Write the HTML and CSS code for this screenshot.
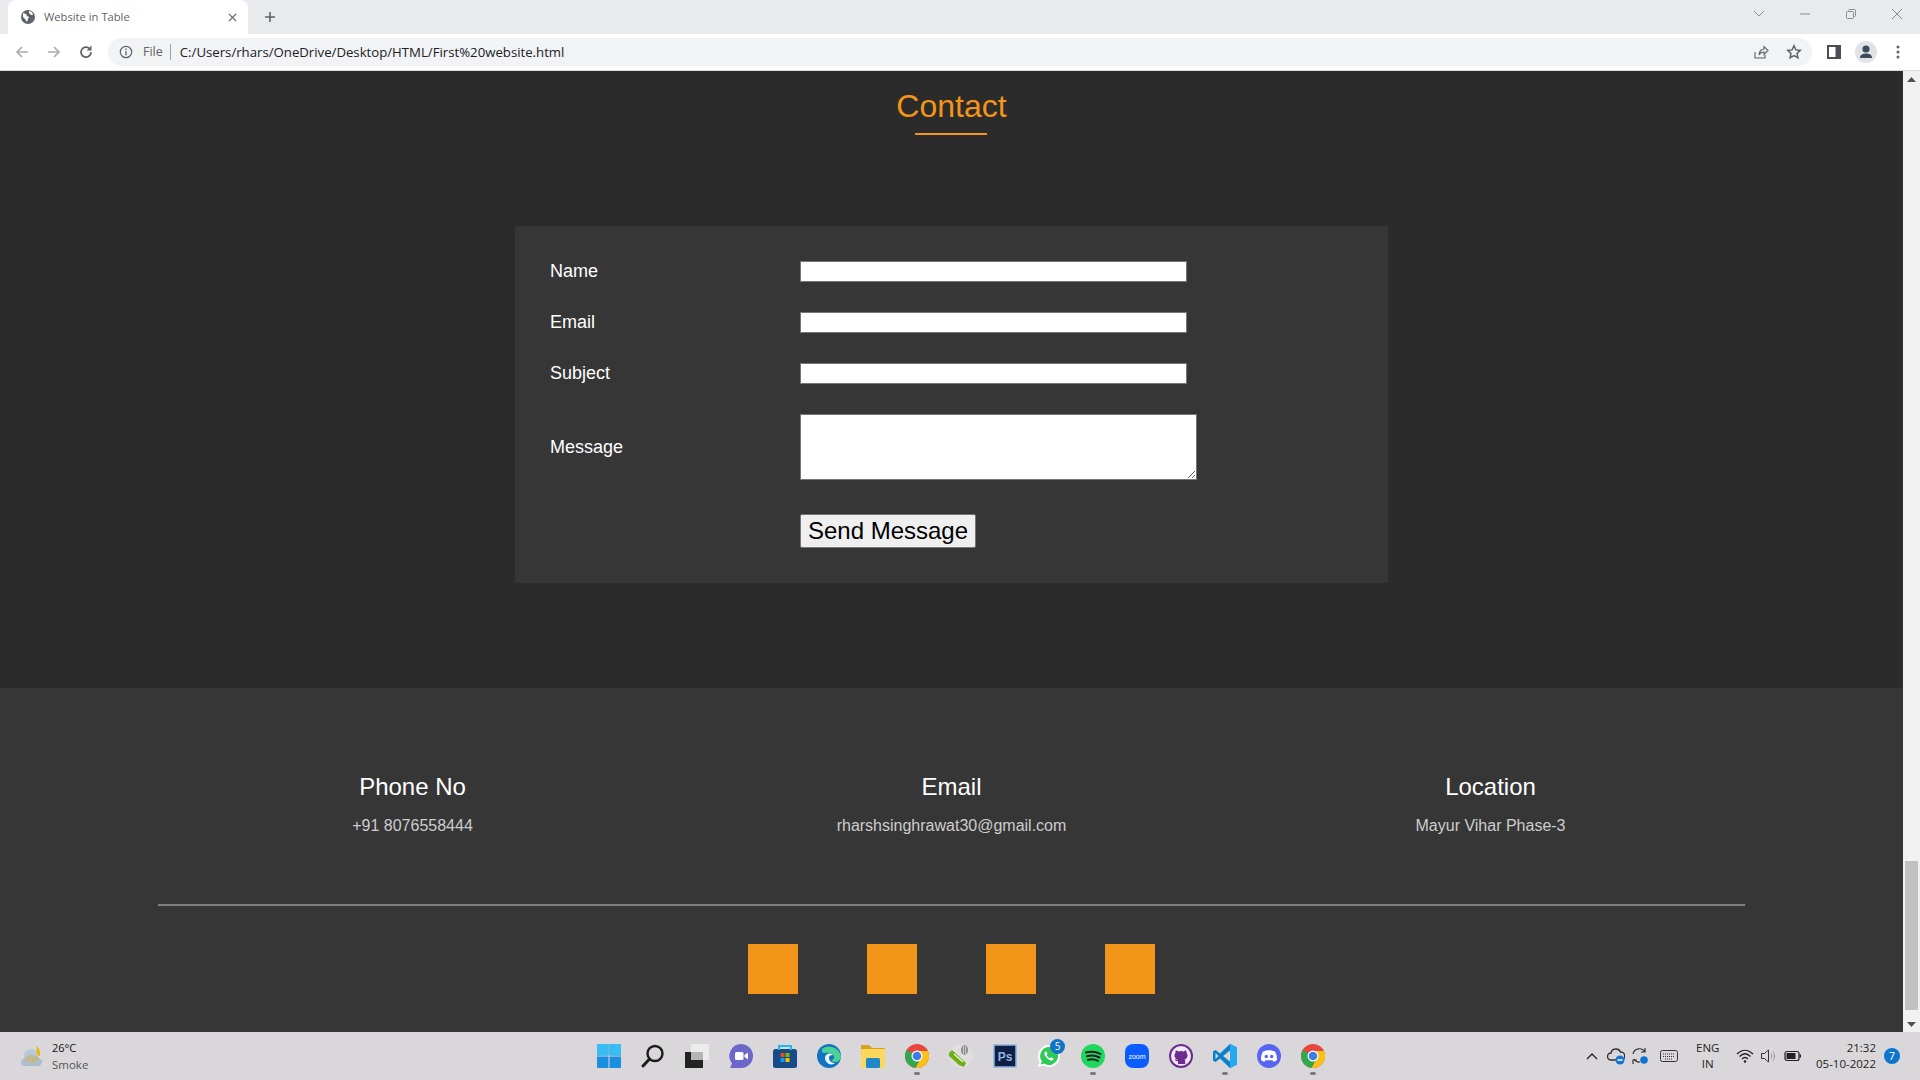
FILE: index.html
```html
<!DOCTYPE html>
<html lang="en">
<head>
<meta charset="utf-8">
<title>Website in Table</title>
<link rel="stylesheet" href="styles.css">
</head>
<body>
<div class="desktop">
  <header class="tabstrip">
    <div class="tab">
      <svg class="favicon" viewBox="0 0 16 16"><circle cx="8" cy="8" r="7" fill="#5f6368"/><path d="M3 4l3 1 1 2 2 1-1 2-1 3-2-3-2-2zM9 2l3 1 1 3-2 0-2-2z" fill="#fff"/></svg>
      <span class="tab-title">Website in Table</span>
      <svg class="tab-close" viewBox="0 0 10 10"><path d="M1 1l8 8M9 1l-8 8" stroke="#5f6368" stroke-width="1.4"/></svg>
    </div>
    <svg class="new-tab" viewBox="0 0 12 12"><path d="M6 1v10M1 6h10" stroke="#5f6368" stroke-width="1.6"/></svg>
    <div class="window-controls">
      <svg class="wc wc-chevron" viewBox="0 0 12 8"><path d="M1 1l5 5 5-5" fill="none" stroke="#8a8d91" stroke-width="1"/></svg>
      <svg class="wc" viewBox="0 0 12 12"><path d="M1 6h10" stroke="#8a8d91"/></svg>
      <svg class="wc" viewBox="0 0 12 12"><path d="M3.5 2.5a1 1 0 0 1 1-1h5a1 1 0 0 1 1 1v5a1 1 0 0 1-1 1M2.500 3.500h5a1 1 0 0 1 1 1v5a1 1 0 0 1-1 1h-5a1 1 0 0 1-1-1v-5a1 1 0 0 1 1-1z" fill="none" stroke="#8a8d91"/></svg>
      <svg class="wc" viewBox="0 0 12 12"><path d="M1 1l10 10M11 1L1 11" stroke="#8a8d91"/></svg>
    </div>
  </header>

  <nav class="toolbar">
    <svg class="nav-icon" viewBox="0 0 16 16"><path d="M14 8H3M8 3L3 8l5 5" fill="none" stroke="#a9acb0" stroke-width="1.6"/></svg>
    <svg class="nav-icon" viewBox="0 0 16 16"><path d="M2 8h11M8 3l5 5-5 5" fill="none" stroke="#a9acb0" stroke-width="1.6"/></svg>
    <svg class="nav-icon" viewBox="0 0 16 16"><path d="M13 8a5 5 0 1 1-1.500-3.500" fill="none" stroke="#5f6368" stroke-width="1.700"/><path d="M13.500 1.500v5h-5z" fill="#5f6368"/></svg>
    <div class="omnibox">
      <svg class="info-icon" viewBox="0 0 14 14"><circle cx="7" cy="7" r="5.700" fill="none" stroke="#5f6368" stroke-width="1.200"/><path d="M7 6v4.200M7 3.600v1.300" stroke="#5f6368" stroke-width="1.300"/></svg>
      <span class="scheme">File</span>
      <span class="omni-sep"></span>
      <span class="url">C:/Users/rhars/OneDrive/Desktop/HTML/First%20website.html</span>
      <svg class="share-icon" viewBox="0 0 16 16"><path d="M2 8v6h10v-3M6 11c0-4 3-6 5-6V2.500l4 4-4 4V8c-2 0-4 1-5 3z" fill="none" stroke="#5f6368" stroke-width="1.100"/></svg>
      <svg class="star-icon" viewBox="0 0 16 16"><path d="M8 1.800l1.900 4.100 4.400.5-3.300 3 .9 4.400L8 11.600l-3.900 2.200.9-4.400-3.300-3 4.400-.5z" fill="none" stroke="#5f6368" stroke-width="1.500"/></svg>
    </div>
    <svg class="panel-icon" viewBox="0 0 14 14"><rect width="14" height="14" fill="#4b4f54"/><rect x="2" y="2" width="6.500" height="10" fill="#fff"/></svg>
    <div class="avatar"><svg viewBox="0 0 22 22"><circle cx="11" cy="8" r="3.600" fill="#3f4a5e"/><path d="M5 17c0-3.500 3-4.500 6-4.500s6 1 6 4.500z" fill="#3f4a5e"/></svg></div>
    <svg class="menu-icon" viewBox="0 0 4 14"><circle cx="2" cy="2" r="1.500" fill="#5f6368"/><circle cx="2" cy="7" r="1.500" fill="#5f6368"/><circle cx="2" cy="12" r="1.500" fill="#5f6368"/></svg>
  </nav>

  <div class="viewport">
    <main class="page">
      <section class="contact">
        <h2 class="contact-title">Contact</h2>
        <div class="title-rule"></div>
        <form class="contact-form">
          <div class="form-row"><label class="form-label">Name</label><input class="form-input" type="text"></div>
          <div class="form-row"><label class="form-label">Email</label><input class="form-input" type="text"></div>
          <div class="form-row"><label class="form-label">Subject</label><input class="form-input" type="text"></div>
          <div class="form-row form-row-message"><label class="form-label">Message</label><textarea class="form-textarea"></textarea></div>
          <div class="form-row form-row-send"><span class="form-label"></span><button class="send-button" type="button">Send Message</button></div>
        </form>
      </section>
      <footer class="footer">
        <div class="footer-columns">
          <div class="footer-col"><h3 class="footer-heading">Phone No</h3><p class="footer-text">+91 8076558444</p></div>
          <div class="footer-col"><h3 class="footer-heading">Email</h3><p class="footer-text">rharshsinghrawat30@gmail.com</p></div>
          <div class="footer-col"><h3 class="footer-heading">Location</h3><p class="footer-text">Mayur Vihar Phase-3</p></div>
        </div>
        <div class="footer-rule"></div>
        <div class="socials"><span class="social"></span><span class="social"></span><span class="social"></span><span class="social"></span></div>
      </footer>
    </main>
    <aside class="scrollbar">
      <svg class="arrow" viewBox="0 0 9 5"><path d="M0 5l4.500-5L9 5z" fill="#505050"/></svg>
      <div class="track"><div class="thumb"></div></div>
      <svg class="arrow" viewBox="0 0 9 5"><path d="M0 0l4.500 5L9 0z" fill="#505050"/></svg>
    </aside>
  </div>

  <div class="taskbar">
    <div class="weather">
      <svg class="weather-icon" viewBox="0 0 26 26"><path d="M17 3c3 2 5 5 4 10l-5-1c2-3 2-6 1-9z" fill="#f2b600"/><circle cx="12" cy="13" r="7" fill="#b5c9dc"/><path d="M2 20a5 5 0 0 1 5-5c2-3 8-3 10 0a4.500 4.500 0 0 1 6 4 4.500 4.500 0 0 1-4 4H6a4 4 0 0 1-4-3z" fill="#a9bfd1"/><ellipse cx="13" cy="16" rx="7" ry="4" fill="#c3b98e"/></svg>
      <div class="weather-text"><span class="temp">26°C</span><span class="cond">Smoke</span></div>
    </div>
    <div class="apps">
      <span class="app"><svg viewBox="0 0 24 24"><path d="M0 1a1 1 0 0 1 1-1h10.500v11.500H0zM12.500 0H23a1 1 0 0 1 1 1v10.500H12.500zM0 12.500h11.500V24H1a1 1 0 0 1-1-1zM12.500 12.500H24V23a1 1 0 0 1-1 1H12.500z" fill="#1a8fe0"/><path d="M0 1a1 1 0 0 1 1-1h10.500v11.500H0zM12.500 0H23a1 1 0 0 1 1 1v10.500H12.500z" fill="#38bdf2"/></svg></span>
      <span class="app"><svg viewBox="0 0 24 24"><circle cx="14" cy="9.500" r="7.500" fill="none" stroke="#1d1d1d" stroke-width="2.400"/><path d="M8.500 15L2 22" stroke="#1d1d1d" stroke-width="3" stroke-linecap="round"/></svg></span>
      <span class="app"><svg viewBox="0 0 24 24"><rect x="0" y="8" width="18" height="16" fill="#222"/><rect x="6" y="0" width="18" height="16" fill="#ececec"/><rect x="6" y="8" width="12" height="8" fill="#b5b5b5"/></svg></span>
      <span class="app"><svg viewBox="0 0 24 24"><path d="M12 0a12 12 0 0 1 0 24H1l2-4.500A12 12 0 0 1 12 0z" fill="#6d67c9"/><rect x="6" y="8" width="8.500" height="8" rx="1.500" fill="#fff"/><path d="M15.500 11l3.500-2.500v7L15.500 13z" fill="#fff"/></svg></span>
      <span class="app"><svg viewBox="0 0 24 24"><rect x="0" y="5" width="24" height="19" rx="2.500" fill="#174a87"/><path d="M6 6V2h12v4" fill="none" stroke="#20b8ef" stroke-width="2"/><rect x="7.500" y="9" width="4" height="4" fill="#ea4e21"/><rect x="12.500" y="9" width="4" height="4" fill="#7db900"/><rect x="7.500" y="14" width="4" height="4" fill="#00a3ee"/><rect x="12.500" y="14" width="4" height="4" fill="#ffb900"/></svg></span>
      <span class="app"><svg viewBox="0 0 24 24"><circle cx="12" cy="12" r="12" fill="#1172c4"/><path d="M4 6a12 12 0 0 1 20 6c0 4-3 6-6 6-2 0-4-1-3-2 3-1 3-6-2-7C8 8 5 11 5 6z" fill="#4ad195"/><path d="M8 14c0-4 5-6 8-3-1 0-4 0-4 3s3 5 6 5c-5 4-10-1-10-5z" fill="#eaf5fb"/></svg></span>
      <span class="app"><svg viewBox="0 0 24 24"><path d="M0 2a1 1 0 0 1 1-1h7l3 3h12a1 1 0 0 1 1 1v3H0z" fill="#d9a11f"/><rect x="0" y="5" width="24" height="19" rx="1" fill="#fbd75b"/><rect x="5" y="14" width="14" height="10" rx="1.500" fill="#1e88c9"/></svg></span>
      <span class="app app-open"><svg viewBox="0 0 24 24"><use href="#chrome-logo"/></svg></span>
      <span class="app"><svg viewBox="0 0 24 24"><circle cx="12" cy="12" r="12" fill="#e0dee0"/><path d="M0 9l3-3 14 13-2 4-5-2-10-9z" fill="#6fae12"/><path d="M5 10l9 8" stroke="#eef3df" stroke-width="1.300"/><ellipse cx="15.500" cy="6" rx="3.500" ry="5" fill="#8d8d8d"/><path d="M14.500 1.500v9M16.500 1.500v9" stroke="#c9c9c9"/></svg></span>
      <span class="app"><svg viewBox="0 0 24 24"><rect x="1" y="1" width="22" height="22" fill="#101f45" stroke="#8fb4e0" stroke-width="1.500"/><text class="ps-text" x="12" y="16.500" text-anchor="middle">Ps</text></svg></span>
      <span class="app app-badged"><svg viewBox="0 0 24 24"><path d="M12 1a11 11 0 1 1-5.500 20.500L1 23l1.600-5.300A11 11 0 0 1 12 1z" fill="#fff"/><path d="M12 3a9 9 0 1 1-4.800 16.600L3.800 20.500l1-3.300A9 9 0 0 1 12 3z" fill="#2fc95a"/><path d="M8.500 7.500c-1.500 1-1.500 3 .5 5.500s4.500 4 6 3.500c1-.4 1.500-1.200 1.500-2l-2.500-1.300-1 1c-1.500-.5-3-2-3.500-3.500l1-1L9.500 7.500z" fill="#fff"/></svg><span class="badge">5</span></span>
      <span class="app app-open"><svg viewBox="0 0 24 24"><circle cx="12" cy="12" r="12" fill="#1ed760"/><path d="M5 8.500c5-1.500 10-1 14.500 1.500M6 12.200c4.500-1.200 8.500-.8 12.500 1.300M7 15.800c3.500-.9 7-.6 10 1" fill="none" stroke="#1d1d1d" stroke-width="2" stroke-linecap="round"/></svg></span>
      <span class="app"><svg viewBox="0 0 24 24"><rect width="24" height="24" rx="8" fill="#0b5cff"/><text class="zoom-text" x="12" y="14.500" text-anchor="middle">zoom</text></svg></span>
      <span class="app"><svg viewBox="0 0 24 24"><circle cx="12" cy="12" r="12" fill="#6e2c91"/><circle cx="12" cy="12" r="10" fill="#efe9f3"/><path d="M9 20v-3c-2 .5-3-.5-3.500-2 1 .5 2 1 3 .5-2-.5-3-2-3-4 0-1 .4-2 1-2.500-.2-1 0-2 .3-2.500 1 0 2 .6 2.500 1a8 8 0 0 1 5.400 0c.6-.4 1.500-1 2.500-1 .3.500.5 1.500.3 2.500.6.5 1 1.500 1 2.500 0 2-1 3.500-3 4 .5.500.7 1 .7 2v2.500z" fill="#6e2c91"/></svg></span>
      <span class="app app-open"><svg viewBox="0 0 24 24"><path d="M17 0l7 3.500v17L17 24 7 14.500 2.500 18 0 16.500V7.500L2.500 6 7 9.500z" fill="#0a7fcb"/><path d="M17 0l7 3.500v17L17 24z" fill="#24a9f2"/><path d="M17 6.500L10 12l7 5.500z" fill="#d9d7d8"/><path d="M2.500 9v6L5.500 12z" fill="#d9d7d8"/></svg></span>
      <span class="app"><svg viewBox="0 0 24 24"><circle cx="12" cy="12" r="12" fill="#5865f2"/><path d="M6 7.500c4-1.800 8-1.800 12 0 1.500 2.500 2 5.500 2 8.500-1.300 1-2.500 1.500-3.500 1.700l-1-1.500H8.500l-1 1.500C6.500 17.500 5.300 17 4 16c0-3 .5-6 2-8.500z" fill="#fff"/><circle cx="9.300" cy="12.500" r="1.700" fill="#5865f2"/><circle cx="14.700" cy="12.500" r="1.700" fill="#5865f2"/></svg></span>
      <span class="app app-open"><svg viewBox="0 0 24 24"><use href="#chrome-logo"/></svg></span>
    </div>
    <div class="tray">
      <svg class="tray-caret" viewBox="0 0 12 7"><path d="M1 6l5-5 5 5" fill="none" stroke="#222" stroke-width="1.300"/></svg>
      <svg class="tray-icon" viewBox="0 0 18 18"><path d="M4 13a3.500 3.500 0 0 1 0-7 5 5 0 0 1 9.500-1A4 4 0 0 1 14 13z" fill="none" stroke="#333" stroke-width="1.400"/><circle cx="13" cy="13" r="4.500" fill="#1573d6"/><path d="M10.500 13h5" stroke="#fff" stroke-width="1.500"/></svg>
      <svg class="tray-icon" viewBox="0 0 18 18"><path d="M2 7a6.500 6.500 0 0 1 12-2M14 1v4h-4M9 15a6 6 0 0 1-6-3M2 17v-4h4" fill="none" stroke="#333" stroke-width="1.200"/><circle cx="13" cy="13" r="3.800" fill="#0f74d8"/></svg>
      <svg class="tray-key" viewBox="0 0 18 14"><rect x=".5" y="1.500" width="17" height="11" rx="2" fill="none" stroke="#333"/><path d="M3 5h12M3 7.500h12M5 10h8" stroke="#333" stroke-dasharray="1 1"/></svg>
      <div class="lang"><span>ENG</span><span>IN</span></div>
      <svg class="tray-icon" viewBox="0 0 18 18"><path d="M1 7c5-5 11-5 16 0M3.500 9.500c3.500-3.500 7.500-3.500 11 0M6 12c2-2 4-2 6 0" fill="none" stroke="#222" stroke-width="1.200"/><circle cx="9" cy="14.500" r="1.200" fill="#222"/></svg>
      <svg class="tray-icon" viewBox="0 0 18 18"><path d="M1.500 6.500h3l4-3.500v12l-4-3.500h-3z" fill="none" stroke="#333"/><path d="M11 6.500c1 1.500 1 3.500 0 5M13 4.500c2 2.500 2 6.500 0 9" fill="none" stroke="#999"/></svg>
      <svg class="tray-icon" viewBox="0 0 18 18"><rect x="1" y="4.500" width="14" height="9" rx="2" fill="none" stroke="#222" stroke-width="1.200"/><rect x="2.500" y="6" width="9" height="6" fill="#222"/><rect x="15.500" y="7.500" width="1.500" height="3" fill="#222"/></svg>
      <div class="clock"><span>21:32</span><span>05-10-2022</span></div>
      <span class="notif">7</span>
    </div>
  </div>
</div>
<svg class="defs" width="0" height="0"><defs>
  <symbol id="chrome-logo" viewBox="0 0 24 24">
    <circle cx="12" cy="12" r="12" fill="#e8453c"/>
    <path d="M12 12L1.600 6A12 12 0 0 0 10.500 23.900L16 14z" fill="#2fa84f"/>
    <path d="M12 7h10.900A12 12 0 0 1 10.500 23.900L16 14z" fill="#fbc116"/>
    <circle cx="12" cy="12" r="5.500" fill="#fff"/>
    <circle cx="12" cy="12" r="4.300" fill="#3b7fe6"/>
  </symbol>
</defs></svg>
</body>
</html>
```
FILE: styles.css
```css
* { box-sizing: border-box; }
html, body { margin: 0; padding: 0; height: 100%; overflow: hidden; }
body { font-family: "Liberation Sans", Arial, sans-serif; }
.desktop { width: 1920px; height: 1080px; display: flex; flex-direction: column; overflow: hidden; }
.defs { display: block; height: 0; }

/* browser chrome */
.tabstrip { height: 34px; background: #e8eaed; display: flex; align-items: center; padding-left: 8px; flex: none; }
.tab { width: 240px; height: 34px; background: #fff; border-radius: 8px 8px 0 0; display: flex; align-items: center; padding: 0 10px 0 12px; margin-top: 0; }
.favicon { width: 16px; height: 16px; flex: none; }
.tab-title { margin: 0 0 2px 8px; font: 11.200px "Open Sans", sans-serif; color: #5f6368; flex: 1; }
.tab-close { width: 9px; height: 9px; margin-right: 1px; }
.new-tab { width: 12px; height: 12px; margin-left: 16px; }
.window-controls { margin-left: auto; display: flex; align-items: center; margin-right: 17px; margin-top: -6px; gap: 34px; }
.wc { width: 12px; height: 12px; display: block; }
.wc-chevron { height: 8px; }
.toolbar { height: 37px; background: #fff; display: flex; align-items: center; padding: 0 0 1px 14px; flex: none; border-bottom: 1px solid #d8dadd; }
.nav-icon { width: 16px; height: 16px; margin-right: 16px; }
.nav-icon:nth-child(3) { margin-right: 14px; }
.omnibox { width: 1704px; height: 28px; background: #f1f3f4; border-radius: 14px; display: flex; align-items: center; padding: 0 10px 0 11px; }
.info-icon { width: 14px; height: 14px; flex: none; }
.scheme { font: 12.500px "Open Sans", sans-serif; color: #5f6368; margin-left: 10px; }
.omni-sep { width: 1px; height: 16px; background: #9aa0a6; margin: 0 9px 0 7px; }
.url { font: 13.200px "Open Sans", sans-serif; color: #202124; flex: 1; }
.share-icon { width: 16px; height: 16px; margin-right: 17px; }
.star-icon { width: 16px; height: 16px; }
.panel-icon { width: 14px; height: 14px; margin-left: 15px; flex: none; }
.avatar { width: 22px; height: 22px; border-radius: 50%; background: #e1e3e7; margin-left: 14px; flex: none; }
.avatar svg { display: block; width: 22px; height: 22px; }
.menu-icon { width: 4px; height: 14px; margin-left: 19px; flex: none; }

/* page */
.viewport { height: 961px; display: flex; flex: none; overflow: hidden; }
.page { width: 1903px; height: 961px; background: #2b2b2b; display: flex; flex-direction: column; overflow: hidden; }
.contact { height: 617px; flex: none; display: flex; flex-direction: column; align-items: center; padding-top: 17px; }
.contact-title { margin: 0; font-size: 32px; font-weight: 400; line-height: 37px; color: #f39519; }
.title-rule { width: 72px; height: 2px; background: #f39519; margin: 8px 2px 0 0; }
.contact-form { width: 873px; height: 357px; background: #363636; margin-top: 91px; padding: 35px 35px 0; display: flex; flex-direction: column; }
.form-row { display: flex; align-items: center; height: 21px; margin-bottom: 30px; }
.form-row-message { height: 66px; margin-top: 0; }
.form-row-send { height: 34px; margin-top: 4px; margin-bottom: 0; }
.form-label { width: 250px; color: #fff; font-size: 18px; flex: none; }
.form-input { width: 387px; height: 21px; background: #fff; border: 1px solid #767676; border-radius: 0; padding: 1px 2px; display: block; }
.form-textarea { width: 397px; height: 66px; background: #fff; border: 1px solid #767676; border-radius: 0; display: block; padding: 2px; }
.send-button { height: 34px; width: 176px; padding: 0; font: 24px "Liberation Sans", sans-serif; color: #000; background: #efefef; border: 1px solid #767676; border-radius: 2px; }

.footer { background: #363636; flex: 1; display: flex; flex-direction: column; align-items: center; padding-top: 85px; }
.footer-columns { width: 1617px; display: grid; grid-template-columns: repeat(3, 1fr); flex: none; }
.footer-col { display: flex; flex-direction: column; align-items: center; }
.footer-heading { margin: 0; font-size: 24px; line-height: 28px; font-weight: 400; color: #fff; }
.footer-text { margin: 16px 0 0; font-size: 16px; line-height: 18px; color: #cdcdcd; }
.footer-rule { width: 1587px; height: 2px; background: #808080; margin-top: 69px; flex: none; }
.socials { display: flex; gap: 69px; margin-top: 38px; margin-right: 0; }
.social { width: 50px; height: 50px; background: #f39519; display: block; }

.scrollbar { width: 17px; background: #f1f1f1; display: flex; flex-direction: column; align-items: center; padding: 6px 0 5px; flex: none; }
.arrow { width: 9px; height: 5px; flex: none; }
.track { flex: 1; width: 13px; display: flex; flex-direction: column; justify-content: flex-end; padding-bottom: 12px; }
.thumb { height: 149px; background: #c1c1c1; }

/* taskbar */
.taskbar { height: 48px; flex: none; background: #d9d7d9; display: flex; align-items: center; position: relative; }
.weather { display: flex; align-items: center; width: 597px; padding-left: 19px; flex: none; }
.weather-icon { width: 26px; height: 26px; }
.weather-text { display: flex; flex-direction: column; margin-left: 7px; font: 11.500px "Open Sans", sans-serif; line-height: 17px; }
.temp { color: #111; font-size: 11px; }
.cond { color: #555; }
.apps { display: flex; align-items: center; margin-left: -10px; width: 760px; flex: none; }
.app { width: 44px; height: 24px; display: flex; justify-content: center; position: relative; flex: none; }
.app svg { width: 24px; height: 24px; display: block; }
.app-open::after { content: ""; position: absolute; left: 50%; bottom: -7px; width: 6px; height: 3px; margin-left: -3px; border-radius: 2px; background: #7b7b7b; }
.badge { position: absolute; top: -5px; left: 23px; width: 15px; height: 15px; border-radius: 50%; background: #0f74c4; color: #fff; font: 10px/15px "Open Sans", sans-serif; text-align: center; }
.ps-text { font: bold 12px "Liberation Sans", sans-serif; fill: #8fb4e0; }
.zoom-text { font: 7px "Liberation Sans", sans-serif; fill: #fff; }
.tray { margin-left: auto; display: flex; align-items: center; padding-right: 20px; color: #222; }
.tray-caret { width: 12px; height: 7px; margin-right: 9px; }
.tray-icon { width: 18px; height: 18px; margin-right: 6px; }
.tray-key { width: 18px; height: 14px; margin: 0 12px 0 5px; }
.lang { display: flex; flex-direction: column; align-items: center; font: 11.500px/16px "Open Sans", sans-serif; margin: 0 17px 0 6px; }
.clock { display: flex; flex-direction: column; align-items: flex-end; font: 11.500px/16px "Open Sans", sans-serif; margin: 0 8px 0 7.500px; }
.notif { width: 16px; height: 16px; border-radius: 50%; background: #0f74d0; color: #fff; font: 11px/16px "Open Sans", sans-serif; text-align: center; }
```
